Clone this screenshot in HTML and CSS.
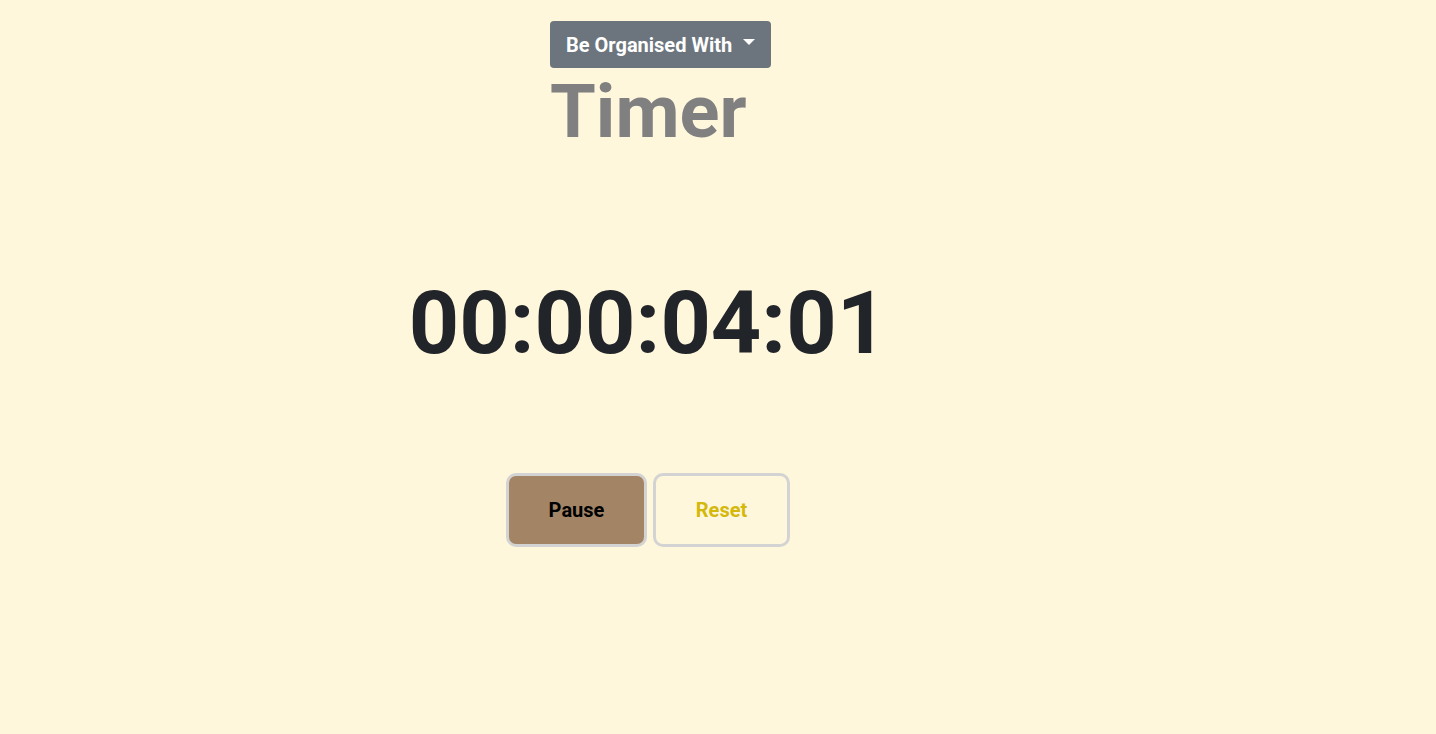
FILE: index.html
```html
<!DOCTYPE html>
<html lang="en">
<head>
<meta charset="utf-8">
<title>Timer</title>
<link rel="stylesheet" href="styles.css">
</head>
<body>
<div class="page">
  <header class="header">
    <button class="dropdown-btn" type="button">Be Organised With<span class="caret"></span></button>
    <h1 class="title">Timer</h1>
  </header>
  <main class="timer">
    <div class="display">00:00:04:01</div>
    <div class="controls">
      <button class="btn btn-pause" type="button">Pause</button>
      <button class="btn btn-reset" type="button">Reset</button>
    </div>
  </main>
</div>
</body>
</html>
```
FILE: styles.css
```css
* { box-sizing: border-box; }
html, body {
  margin: 0;
  height: 100%;
}
body {
  background: #fff7dc;
  font-family: Roboto, "Liberation Sans", sans-serif;
  color: #212529;
}
.page {
  width: 1296px;
  min-height: 734px;
}
.header {
  padding: 21px 0 0 550px;
}
.dropdown-btn {
  display: inline-flex;
  align-items: center;
  height: 47px;
  padding: 0 16px;
  border: 0;
  border-radius: 4px;
  background: #6c757d;
  color: #fff;
  font-family: Roboto, "Liberation Sans", sans-serif;
  font-weight: 700;
  font-size: 20px;
}
.caret {
  display: inline-block;
  margin-left: 11px;
  width: 0;
  height: 0;
  border-top: 6px solid #fff;
  border-left: 6px solid transparent;
  border-right: 6px solid transparent;
  position: relative;
  top: -3px;
}
.title {
  margin: 0;
  font-size: 74px;
  font-weight: 700;
  line-height: 88px;
  color: #808080;
}
.timer {
  display: flex;
  flex-direction: column;
  align-items: center;
}
.display {
  margin-top: 112px;
  font-size: 88px;
  font-weight: 700;
  line-height: 110px;
  color: #212529;
}
.controls {
  display: flex;
  gap: 6px;
  margin-top: 95px;
}
.btn {
  height: 74px;
  border: 3px solid #d3d3d3;
  border-radius: 10px;
  font-family: Roboto, "Liberation Sans", sans-serif;
  font-weight: 700;
  font-size: 20px;
}
.btn-pause {
  width: 141px;
  background: #a38566;
  color: #000;
}
.btn-reset {
  width: 137px;
  background: #fff7dc;
  color: #d4b80c;
}
```
